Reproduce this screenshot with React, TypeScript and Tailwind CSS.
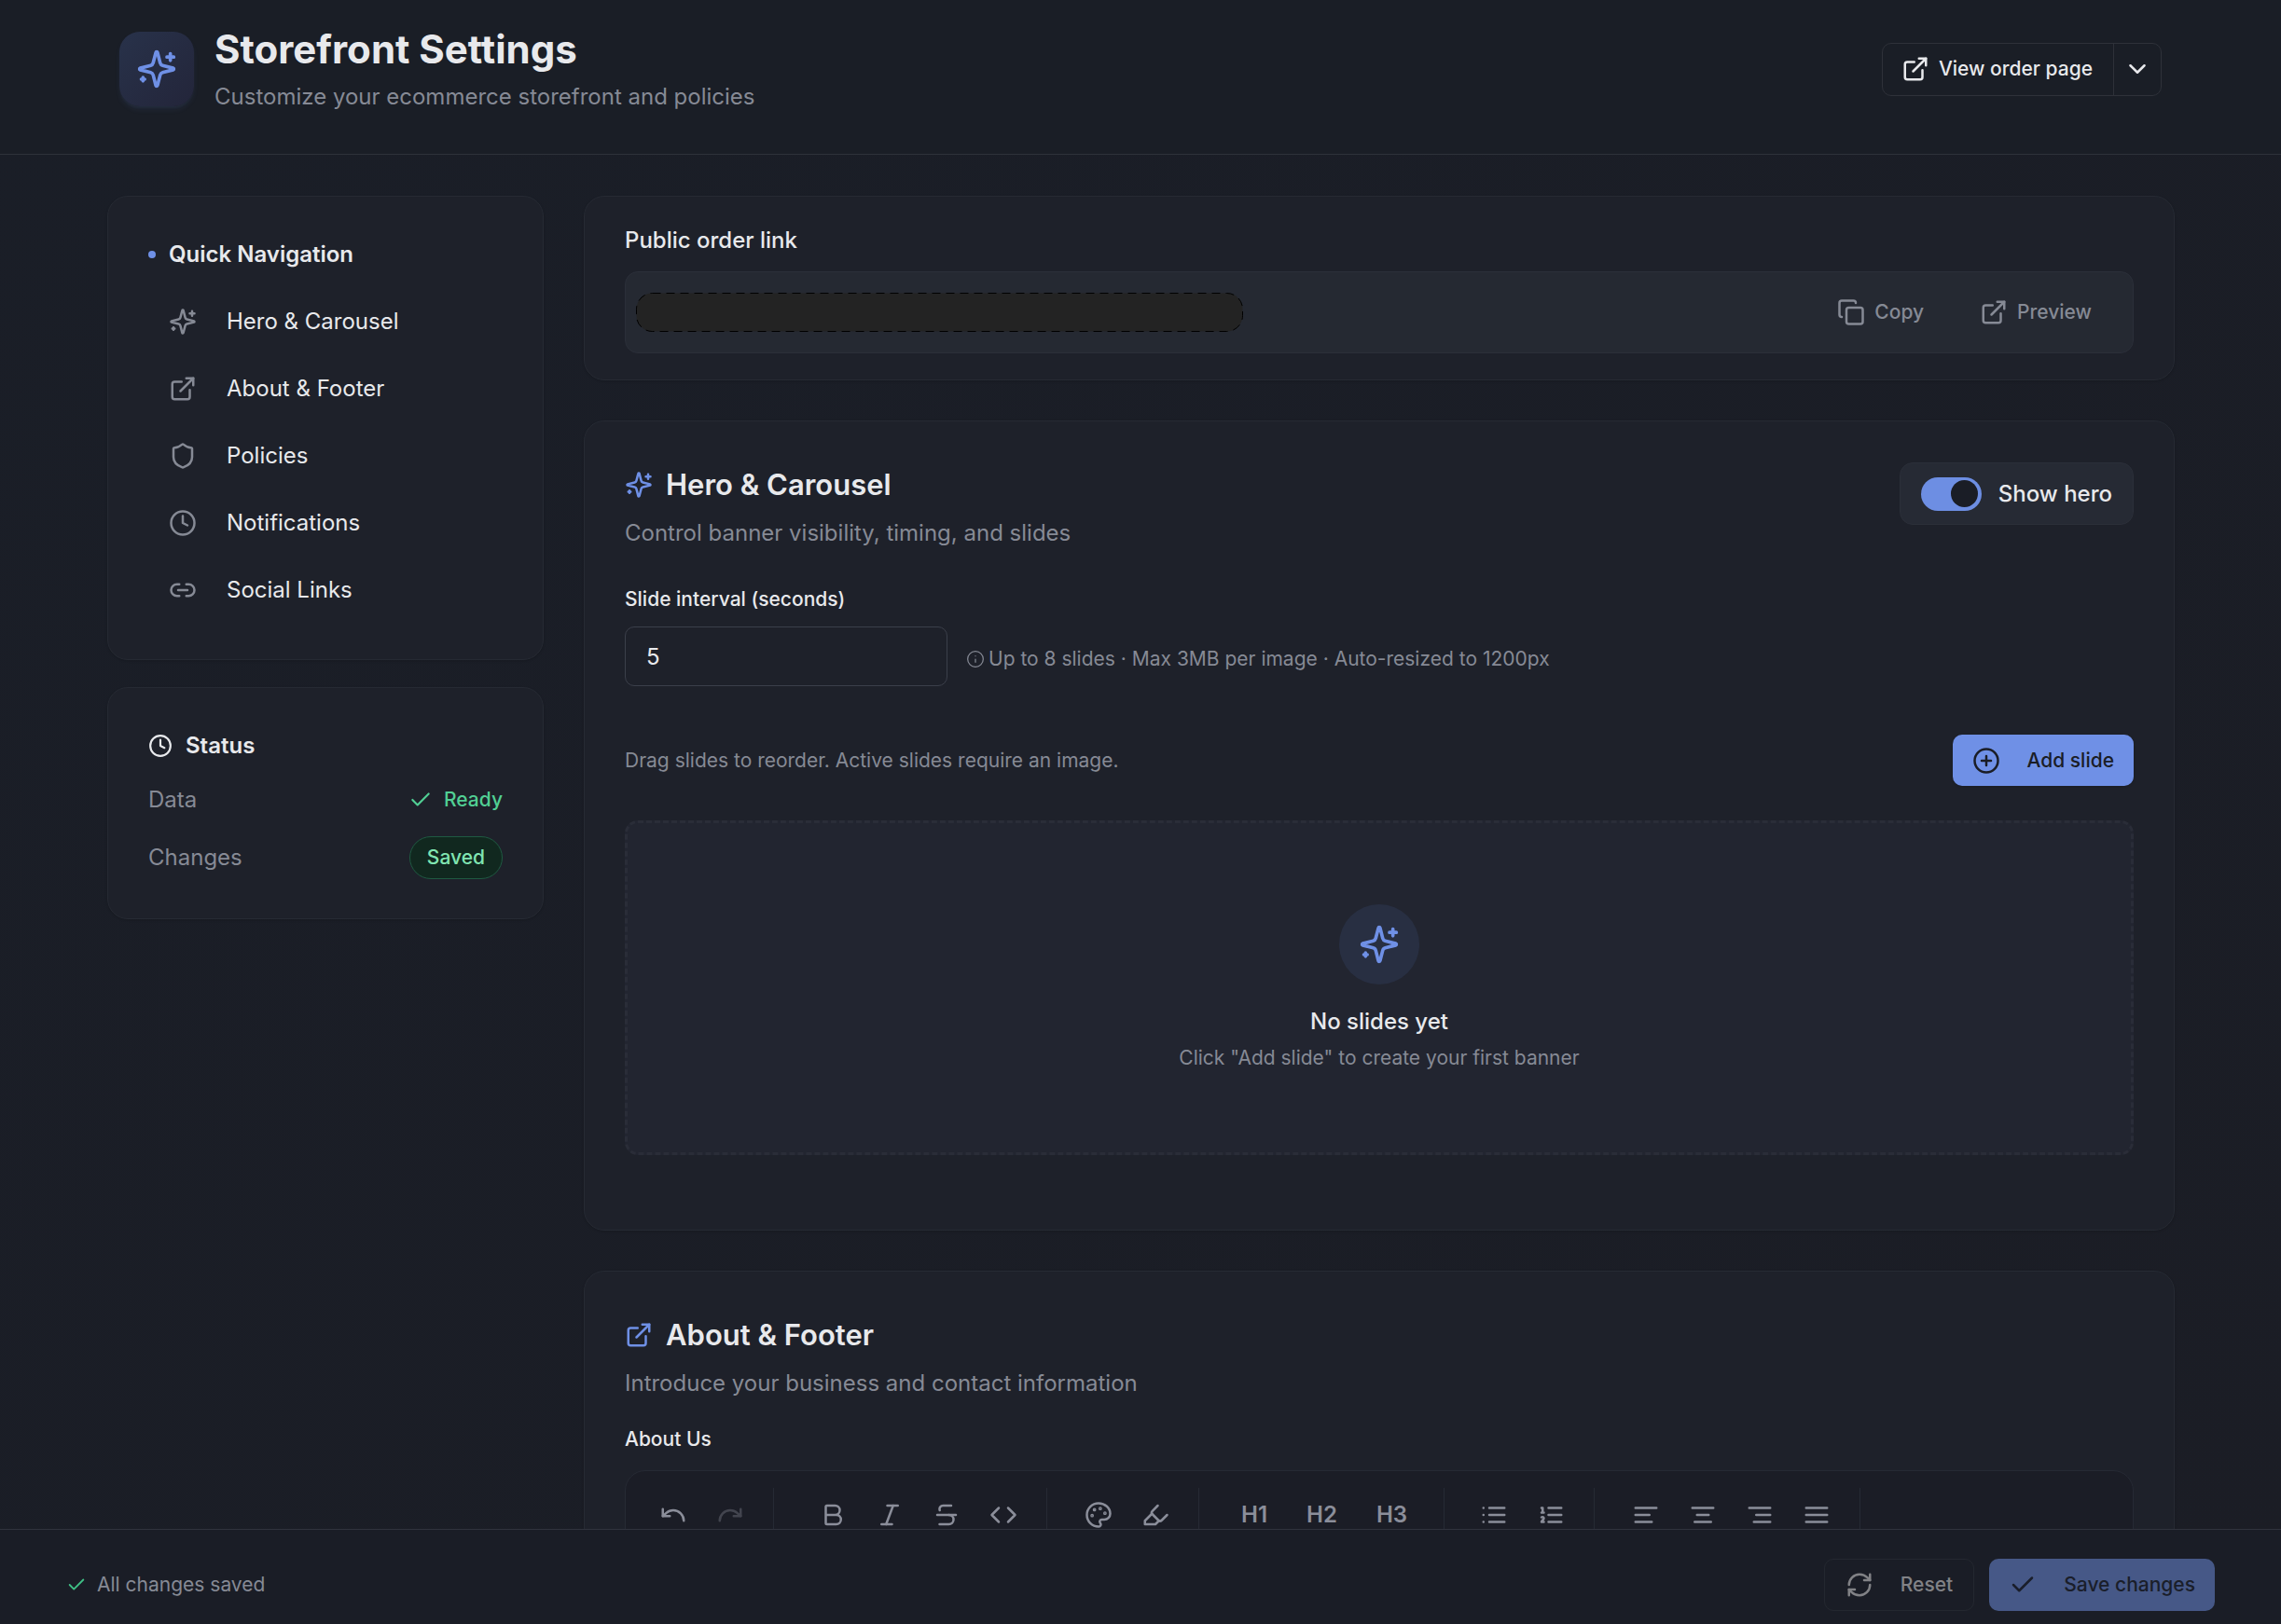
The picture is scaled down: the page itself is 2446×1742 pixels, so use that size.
import { useState, type ComponentType, type ReactNode } from "react";
import {
  Bold,
  Check,
  ChevronDown,
  CirclePlus,
  Code,
  Copy,
  ExternalLink,
  Highlighter,
  Info,
  Italic,
  Link2,
  Palette,
  Redo,
  RefreshCw,
  Shield,
  Strikethrough,
  Undo,
} from "lucide-react";

type IconProps = { className?: string };

function LineIcon({ className, children }: { className?: string; children: ReactNode }) {
  return (
    <svg
      viewBox="0 0 24 24"
      fill="none"
      stroke="currentColor"
      strokeWidth="2"
      strokeLinecap="round"
      strokeLinejoin="round"
      aria-hidden="true"
      className={className}
    >
      {children}
    </svg>
  );
}

const Sparkles = ({ className }: IconProps) => (
  <LineIcon className={className}>
    <path d="M9.937 15.5A2 2 0 0 0 8.5 14.063l-6.135-1.582a.5.5 0 0 1 0-.962L8.5 9.936A2 2 0 0 0 9.937 8.5l1.582-6.135a.5.5 0 0 1 .963 0L14.063 8.5A2 2 0 0 0 15.5 9.937l6.135 1.581a.5.5 0 0 1 0 .964L15.5 14.063a2 2 0 0 0-1.437 1.437l-1.582 6.135a.5.5 0 0 1-.963 0z" />
    <path d="M20 3v4M22 5h-4M4 17v2M5 18H3" />
  </LineIcon>
);
const Clock = ({ className }: IconProps) => (
  <LineIcon className={className}>
    <circle cx="12" cy="12" r="10" />
    <path d="M12 6v6l4 2" />
  </LineIcon>
);
const BulletList = ({ className }: IconProps) => (
  <LineIcon className={className}>
    <path d="M3 12h.01M3 18h.01M3 6h.01M8 12h13M8 18h13M8 6h13" />
  </LineIcon>
);
const NumberList = ({ className }: IconProps) => (
  <LineIcon className={className}>
    <path d="M10 12h11M10 18h11M10 6h11M4 10h2M4 6h1v4M6 18H4c0-1 2-2 2-3s-1-1.5-2-1" />
  </LineIcon>
);
const AlignLeft = ({ className }: IconProps) => (
  <LineIcon className={className}>
    <path d="M15 12H3M17 18H3M21 6H3" />
  </LineIcon>
);
const AlignCenter = ({ className }: IconProps) => (
  <LineIcon className={className}>
    <path d="M17 12H7M19 18H5M21 6H3" />
  </LineIcon>
);
const AlignRight = ({ className }: IconProps) => (
  <LineIcon className={className}>
    <path d="M21 12H9M21 18H7M21 6H3" />
  </LineIcon>
);
const AlignJustify = ({ className }: IconProps) => (
  <LineIcon className={className}>
    <path d="M3 12h18M3 18h18M3 6h18" />
  </LineIcon>
);

const navItems: { label: string; href: string; icon: ComponentType<IconProps> }[] = [
  { label: "Hero & Carousel", href: "#hero", icon: Sparkles },
  { label: "About & Footer", href: "#about", icon: ExternalLink },
  { label: "Policies", href: "#policies", icon: Shield },
  { label: "Notifications", href: "#notifications", icon: Clock },
  { label: "Social Links", href: "#social", icon: Link2 },
];

function Card({ id, className, children }: { id?: string; className: string; children: ReactNode }) {
  return (
    <section
      id={id}
      className={`rounded-[22px] border border-[#262a33] bg-[#1e212a] shadow-sm ${className}`}
    >
      {children}
    </section>
  );
}

function SectionTitle({
  icon: Icon,
  title,
  subtitle,
}: {
  icon: ComponentType<IconProps>;
  title: string;
  subtitle: string;
}) {
  return (
    <div>
      <h2 className="flex items-center gap-3.5 text-[31px] leading-[48px] font-semibold">
        <Icon className="size-[30px] text-[#6f90e6]" />
        {title}
      </h2>
      <p className="mt-2.5 text-[24px] leading-9 text-[#868a95]">{subtitle}</p>
    </div>
  );
}

function ToolGroup({ className, children }: { className: string; children: ReactNode }) {
  return <div className={`flex items-center border-r border-[#262a34] ${className}`}>{children}</div>;
}

function Tool({
  label,
  icon: Icon,
  disabled,
}: {
  label: string;
  icon: ComponentType<IconProps>;
  disabled?: boolean;
}) {
  return (
    <button
      type="button"
      aria-label={label}
      disabled={disabled}
      className="flex h-[58px] w-[61px] items-center justify-center disabled:opacity-35"
    >
      <Icon className="size-[30px]" />
    </button>
  );
}

export default function App() {
  const [showHero, setShowHero] = useState(true);
  const [interval, setInterval] = useState("5");

  return (
    <div className="flex h-screen flex-col overflow-hidden bg-linear-to-br from-[#1a1e27] to-[#1b1d25] font-['Inter',sans-serif] text-[#e8e9ec]">
      <header className="flex shrink-0 items-center justify-between border-b border-[#2e323a] bg-[#1a1e26] px-32 pt-[30px] pb-[47px]">
        <div className="flex items-center gap-[22px]">
          <div className="flex size-20 items-center justify-center rounded-[22px] bg-linear-to-br from-[#28324a] to-[#23253a] text-[#6f90e6] shadow-md shadow-[#6f90e6]/10">
            <Sparkles className="size-11" />
          </div>
          <div>
            <h1 className="text-[42px] leading-[46px] font-bold">Storefront Settings</h1>
            <p className="mt-3.5 text-[24px] leading-7 text-[#868a95]">
              Customize your ecommerce storefront and policies
            </p>
          </div>
        </div>
        <div className="flex h-[57px] rounded-[10px] border border-[#2e3139] text-[21px] font-medium">
          <a href="#order" className="flex items-center gap-2.5 pr-[22px] pl-5">
            <ExternalLink className="size-[30px]" />
            View order page
          </a>
          <button
            type="button"
            aria-label="More options"
            className="flex w-[51px] items-center justify-center border-l border-[#2e3139]"
          >
            <ChevronDown className="size-[30px]" />
          </button>
        </div>
      </header>

      <main className="flex min-h-0 flex-1 items-start gap-[43px] overflow-hidden pt-11 pr-[114px] pl-[115px]">
        <aside className="flex w-[468px] shrink-0 flex-col gap-[29px]">
          <Card className="px-[43px] pt-11 pb-[38px]">
            <h2 className="mb-[18px] flex items-center gap-3.5 text-[24px] leading-9 font-semibold">
              <span className="size-2 rounded-full bg-[#6f90e6]" />
              Quick Navigation
            </h2>
            <nav>
              {navItems.map(({ label, href, icon: Icon }) => (
                <a
                  key={label}
                  href={href}
                  className="flex h-[72px] items-center gap-8 pl-[22px] text-[24px]"
                >
                  <Icon className="size-[30px] text-[#868a95]" />
                  {label}
                </a>
              ))}
            </nav>
          </Card>

          <Card className="px-[43px] pt-11 pb-[42px]">
            <h2 className="flex items-center gap-3.5 text-[24px] leading-9 font-semibold">
              <Clock className="size-[26px]" />
              Status
            </h2>
            <div className="mt-[22px] flex items-center justify-between text-[24px] leading-9">
              <span className="text-[#868a95]">Data</span>
              <span className="flex items-center gap-3 text-[21px] font-medium text-[#51cf94]">
                <Check className="size-[26px]" />
                Ready
              </span>
            </div>
            <div className="mt-[21px] flex items-center justify-between text-[24px]">
              <span className="text-[#868a95]">Changes</span>
              <span className="flex h-[46px] items-center rounded-full border border-[#1f5a42] bg-[#11281f] px-[18px] text-[21px] font-medium text-[#80e5b1]">
                Saved
              </span>
            </div>
          </Card>
        </aside>

        <div className="flex min-w-0 flex-1 flex-col gap-[43px]">
          <Card className="px-[43px] pt-[29px] pb-7">
            <h2 className="text-[24px] leading-9 font-medium">Public order link</h2>
            <div className="mt-[15px] flex h-[88px] items-center justify-between rounded-[14px] border border-[#2b2f39] bg-[#252932] pr-[22px] pl-[11px]">
              <svg className="h-[42px] w-[651px]" aria-hidden="true">
                <rect
                  x="0.5"
                  y="0.5"
                  width="650"
                  height="41"
                  rx="17"
                  fill="#232323"
                  stroke="#000000"
                  strokeDasharray="9 6"
                />
              </svg>
              <div className="flex gap-4 text-[21px] font-medium text-[#868a95]">
                <button type="button" className="flex items-center gap-2.5 px-[22px]">
                  <Copy className="size-[30px]" />
                  Copy
                </button>
                <a href="#preview" className="flex items-center gap-2.5 px-[22px]">
                  <ExternalLink className="size-[30px]" />
                  Preview
                </a>
              </div>
            </div>
          </Card>

          <Card id="hero" className="px-[43px] pt-11 pb-20">
            <div className="flex items-start justify-between">
              <SectionTitle
                icon={Sparkles}
                title="Hero & Carousel"
                subtitle="Control banner visibility, timing, and slides"
              />
              <label className="flex h-[67px] items-center gap-[18px] rounded-[14px] border border-[#2b2f39] bg-[#262a34] px-[22px] text-[24px] font-medium">
                <input
                  type="checkbox"
                  role="switch"
                  checked={showHero}
                  onChange={(e) => setShowHero(e.target.checked)}
                  className="flex h-9 w-[65px] appearance-none items-center rounded-full bg-[#3a3f4b] px-1 before:size-[29px] before:rounded-full before:bg-[#1a1d26] checked:justify-end checked:bg-[#6d8ee3]"
                />
                Show hero
              </label>
            </div>

            <label
              htmlFor="slide-interval"
              className="mt-[39px] block text-[21px] leading-7 font-medium"
            >
              Slide interval (seconds)
            </label>
            <div className="mt-[15px] flex items-center gap-5">
              <input
                id="slide-interval"
                inputMode="numeric"
                value={interval}
                onChange={(e) => setInterval(e.target.value)}
                className="h-16 w-[346px] rounded-[10px] border border-[#3b3f4a] bg-transparent px-[22px] text-[24px]"
              />
              <p className="flex items-center gap-1 pt-1.5 text-[21px] text-[#868a95]">
                <Info className="size-5" strokeWidth={1.5} />
                Up to 8 slides · Max 3MB per image · Auto-resized to 1200px
              </p>
            </div>

            <div className="mt-[52px] flex items-center justify-between">
              <p className="text-[21px] text-[#868a95]">
                Drag slides to reorder. Active slides require an image.
              </p>
              <button
                type="button"
                className="flex h-[55px] items-center gap-[29px] rounded-[10px] bg-[#6f90e6] px-[21px] text-[21px] font-medium text-[#1a1d26] shadow-sm"
              >
                <CirclePlus className="size-[30px]" />
                Add slide
              </button>
            </div>

            <div className="mt-[37px] flex flex-col items-center rounded-[14px] border-[3px] border-dashed border-[#2a2d38] bg-[#222530] py-[87px]">
              <div className="flex size-[86px] items-center justify-center rounded-full bg-[#282f42] text-[#6f90e6]">
                <Sparkles className="size-11" />
              </div>
              <h3 className="mt-[22px] text-[24px] leading-9 font-medium">No slides yet</h3>
              <p className="mt-[7px] text-[21px] leading-7 text-[#868a95]">
                Click "Add slide" to create your first banner
              </p>
            </div>
          </Card>

          <Card id="about" className="px-[43px] pt-11 pb-[43px]">
            <SectionTitle
              icon={ExternalLink}
              title="About & Footer"
              subtitle="Introduce your business and contact information"
            />
            <h3 className="mt-7 text-[21px] leading-7 font-medium">About Us</h3>
            <div className="mt-[19px] rounded-[22px] border border-[#262a34] bg-[#1b1d26] pb-[240px]">
              <div
                role="toolbar"
                aria-label="Formatting"
                className="flex px-5 pt-[18px] text-[#8b8e9a]"
              >
                <ToolGroup className="pr-4">
                  <Tool label="Undo" icon={Undo} />
                  <Tool label="Redo" icon={Redo} disabled />
                </ToolGroup>
                <ToolGroup className="pr-4 pl-8">
                  <Tool label="Bold" icon={Bold} />
                  <Tool label="Italic" icon={Italic} />
                  <Tool label="Strikethrough" icon={Strikethrough} />
                  <Tool label="Code" icon={Code} />
                </ToolGroup>
                <ToolGroup className="pr-4 pl-6">
                  <Tool label="Text color" icon={Palette} />
                  <Tool label="Highlight" icon={Highlighter} />
                </ToolGroup>
                <ToolGroup className="pr-[18px] pl-6 text-[24px] font-semibold">
                  <button type="button" className="px-[21px]">H1</button>
                  <button type="button" className="px-[21px]">H2</button>
                  <button type="button" className="px-[21px]">H3</button>
                </ToolGroup>
                <ToolGroup className="pr-4 pl-[22px]">
                  <Tool label="Bullet list" icon={BulletList} />
                  <Tool label="Numbered list" icon={NumberList} />
                </ToolGroup>
                <ToolGroup className="pr-4 pl-6">
                  <Tool label="Align left" icon={AlignLeft} />
                  <Tool label="Align center" icon={AlignCenter} />
                  <Tool label="Align right" icon={AlignRight} />
                  <Tool label="Justify" icon={AlignJustify} />
                </ToolGroup>
              </div>
            </div>
          </Card>
        </div>
      </main>

      <footer className="flex h-[102px] shrink-0 items-center justify-between border-t border-[#30333d] bg-[#1a1d26] px-[71px] pt-4 text-[21px]">
        <p className="flex items-center gap-[11px] text-[#868a95]">
          <Check className="size-[22px] text-[#3fbf85]" />
          All changes saved
        </p>
        <div className="flex gap-4 font-medium">
          <button
            type="button"
            disabled
            className="flex h-14 items-center gap-[29px] rounded-[10px] border border-[#242830] px-[22px] text-[#818286]"
          >
            <RefreshCw className="size-[30px]" />
            Reset
          </button>
          <button
            type="button"
            disabled
            className="flex h-14 items-center gap-[29px] rounded-[10px] bg-[#465887] px-[21px] text-[#1a1e2a]"
          >
            <Check className="size-[30px]" />
            Save changes
          </button>
        </div>
      </footer>
    </div>
  );
}
